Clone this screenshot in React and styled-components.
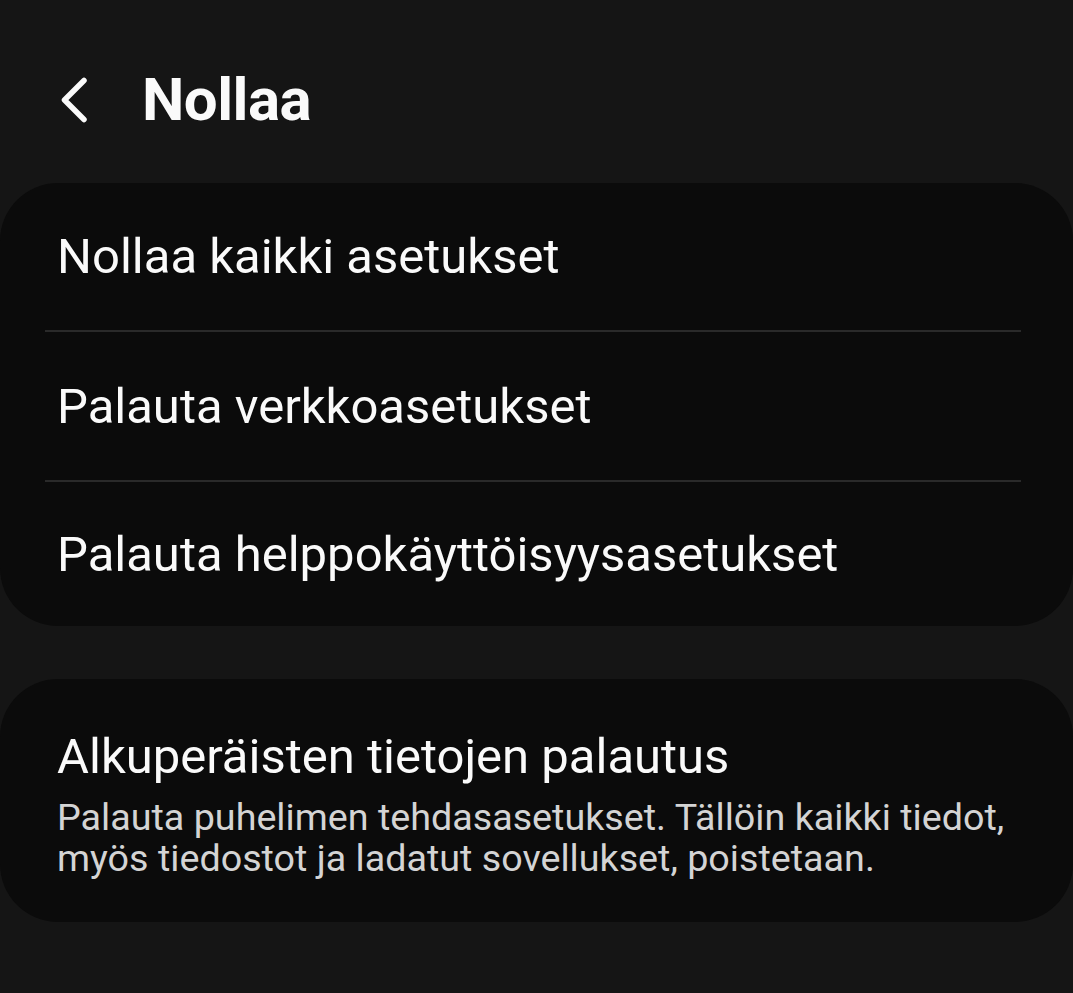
import React from "react";
import styled, { createGlobalStyle } from "styled-components";

const GlobalStyle = createGlobalStyle`
  html, body {
    margin: 0;
    padding: 0;
    background: #151515;
  }
  body {
    font-family: Roboto, "Noto Sans", sans-serif;
    color: #fafafa;
  }
`;

const Page = styled.div`
  width: 1073px;
  height: 993px;
  overflow: hidden;
  background: #151515;
`;

const Header = styled.header`
  height: 183px;
  display: flex;
  align-items: center;
  padding: 16px 0 0 56px;
  box-sizing: border-box;
  gap: 52px;
`;

const BackButton = styled.button`
  background: none;
  border: none;
  padding: 0;
  width: 34px;
  height: 48px;
  display: flex;
  align-items: center;
  justify-content: center;
  color: #fafafa;
  cursor: pointer;
`;

const Title = styled.h1`
  margin: 0;
  font-size: 60px;
  font-weight: 700;
  letter-spacing: -0.5px;
`;

const Card = styled.section`
  background: #0b0b0b;
  border-radius: 58px;
  margin-bottom: ${({ gap }) => gap || 0}px;
`;

const Row = styled.div`
  height: ${({ h }) => h}px;
  display: flex;
  align-items: center;
  padding: 0 57px;
`;

const Divider = styled.div`
  height: 2px;
  margin: 0 52px 0 45px;
  background: #2a2a2a;
`;

const RowLabel = styled.span`
  font-size: 49px;
  font-weight: 400;
`;

const DetailRow = styled.div`
  padding: 48px 57px 43px;
  display: flex;
  flex-direction: column;
`;

const DetailTitle = styled.div`
  font-size: 49px;
  line-height: 60px;
`;

const DetailText = styled.div`
  font-size: 37.7px;
  line-height: 41px;
  color: #d4d4d4;
  margin-top: 10px;
`;

const BackIcon = () => (
  <svg width="34" height="48" viewBox="0 0 34 48" fill="none">
    <path
      d="M28 4.5 L8.5 24 L28 43.5"
      stroke="currentColor"
      strokeWidth="5.5"
      strokeLinecap="round"
      strokeLinejoin="round"
    />
  </svg>
);

const items = [
  { label: "Nollaa kaikki asetukset", h: 147 },
  { label: "Palauta verkkoasetukset", h: 148 },
  { label: "Palauta helppokäyttöisyysasetukset", h: 144 },
];

export default function App() {
  return (
    <Page>
      <GlobalStyle />
      <Header>
        <BackButton aria-label="Takaisin">
          <BackIcon />
        </BackButton>
        <Title>Nollaa</Title>
      </Header>
      <Card gap={53}>
        {items.map((item, i) => (
          <React.Fragment key={item.label}>
            {i > 0 && <Divider />}
            <Row h={item.h}>
              <RowLabel>{item.label}</RowLabel>
            </Row>
          </React.Fragment>
        ))}
      </Card>
      <Card>
        <DetailRow>
          <DetailTitle>Alkuperäisten tietojen palautus</DetailTitle>
          <DetailText>
            Palauta puhelimen tehdasasetukset. Tällöin kaikki tiedot,
            <br />
            myös tiedostot ja ladatut sovellukset, poistetaan.
          </DetailText>
        </DetailRow>
      </Card>
    </Page>
  );
}
